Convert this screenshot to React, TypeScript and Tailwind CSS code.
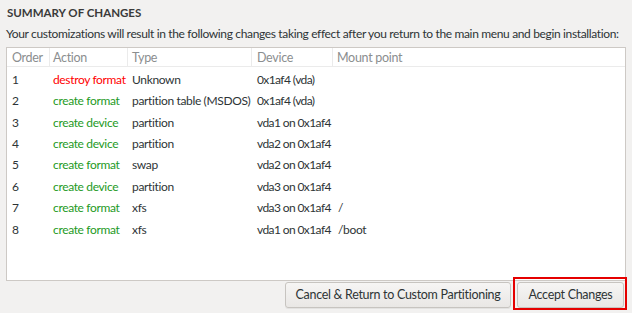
import React from "react";

const rows = [
  ["1", "destroy format", "Unknown", "0x1af4 (vda)", "", true],
  ["2", "create format", "partition table (MSDOS)", "0x1af4 (vda)", "", false],
  ["3", "create device", "partition", "vda1 on 0x1af4", "", false],
  ["4", "create device", "partition", "vda2 on 0x1af4", "", false],
  ["5", "create format", "swap", "vda2 on 0x1af4", "", false],
  ["6", "create device", "partition", "vda3 on 0x1af4", "", false],
  ["7", "create format", "xfs", "vda3 on 0x1af4", "/", false],
  ["8", "create format", "xfs", "vda1 on 0x1af4", "/boot", false],
] as const;

const cols = "grid grid-cols-[43px_78px_124px_81px_1fr] whitespace-nowrap";

export default function App() {
  return (
    <div
      className="w-[632px] h-[313px] bg-[#f2f1f0] text-[#2e3436] overflow-hidden tracking-[-0.3px]"
      style={{ fontFamily: "Lato, 'Noto Sans', sans-serif" }}
    >
      <div className="pl-[7px] pt-[4px] h-[24px] text-[11.5px] font-bold tracking-[0px] text-[#3a3a3a]">
        SUMMARY OF CHANGES
      </div>
      <div className="pl-[6px] h-[19px] text-[12px] leading-[19px] tracking-[-0.35px] text-[#2e3436] whitespace-nowrap">
        Your customizations will result in the following changes taking effect after you return to the main menu and begin installation:
      </div>
      <div className="mx-[6px] mt-[4px] h-[234px] border border-[#cdc9c5] bg-white">
        <div className={`${cols} h-[19px] border-b border-[#ebebeb] text-[12.5px] leading-[19px] text-[#8b8e8f]`}>
          <div className="pl-[5px] border-r border-[#ebebeb]">Order</div>
          <div className="pl-[3px] border-r border-[#ebebeb]">Action</div>
          <div className="pl-[4px] border-r border-[#ebebeb]">Type</div>
          <div className="pl-[5px] border-r border-[#ebebeb]">Device</div>
          <div className="pl-[4px]">Mount point</div>
        </div>
        <div className="pt-[2px]">
          {rows.map((r) => (
            <div key={r[0]} className={`${cols} h-[21.43px] items-center text-[12px] tracking-[-0.35px]`}>
              <div className="pl-[5px]">{r[0]}</div>
              <div className={`pl-[3px] ${r[5] ? "text-[#ff0000]" : "text-[#1e9a1e]"}`}>{r[1]}</div>
              <div className="pl-[4px]">{r[2]}</div>
              <div className="pl-[5px] tracking-[-0.6px]">{r[3]}</div>
              <div className="pl-[5px]">{r[4]}</div>
            </div>
          ))}
        </div>
      </div>
      <div className="flex justify-end items-start gap-[2px] pr-[5px] mt-[-4px]">
        <button className="w-[226px] h-[26px] mt-[5px] rounded-[3px] border border-[#c7c4c0] bg-gradient-to-b from-[#f6f5f4] to-[#e9e7e5] text-[12.5px] text-[#2e3436] whitespace-nowrap shadow-[0_1px_0_rgba(0,0,0,0.06)]">
          Cancel &amp; Return to Custom Partitioning
        </button>
        <div className="border-2 border-[#e50000] pt-[3px] pl-[2px] pr-[1px] pb-0">
          <button className="w-[107px] h-[26px] rounded-[3px] border border-[#c7c4c0] bg-gradient-to-b from-[#f6f5f4] to-[#e9e7e5] text-[12.5px] text-[#2e3436] whitespace-nowrap block">
            Accept Changes
          </button>
        </div>
      </div>
    </div>
  );
}
